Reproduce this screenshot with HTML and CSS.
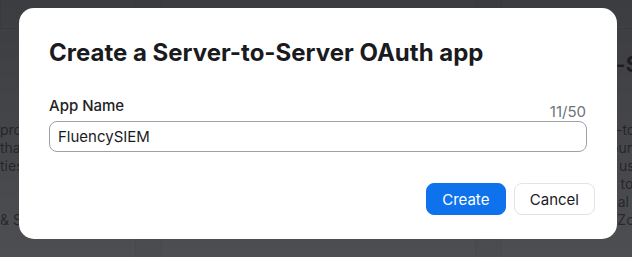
FILE: index.html
```html
<!DOCTYPE html>
<html lang="en">
<head>
    <meta charset="UTF-8">
    <meta name="viewport" content="width=device-width, initial-scale=1.0">
    <title>Create app</title>
    <link rel="stylesheet" href="styles.css">
</head>
<body>
    <div class="page">
        <div class="prev-row">
            <div class="card"></div>
            <div class="card"></div>
            <div class="card"></div>
        </div>
        <div class="row">
            <div class="card">
                <p class="line">processes</p>
                <p class="line">that</p>
                <p class="line">ties</p>
                <p class="line gap">&amp; Services</p>
            </div>
            <div class="card"></div>
            <div class="card">
                <h2>Server-to-Server</h2>
                <p class="line">Use the Server-to-Server</p>
                <p class="line">Authorize to your app</p>
                <p class="line">Add any of the users</p>
                <p class="line">Set the scopes to be</p>
                <p class="line">Build the internal tool</p>
                <p class="line">Use it with our Zoom</p>
            </div>
        </div>
    </div>

    <div class="overlay">
        <div class="modal">
            <h1>Create a Server-to-Server OAuth app</h1>
            <div class="field">
                <div class="field-head">
                    <label for="appName">App Name</label>
                    <span class="counter">11/50</span>
                </div>
                <input type="text" id="appName" value="FluencySIEM">
            </div>
            <div class="actions">
                <button class="btn primary">Create</button>
                <button class="btn">Cancel</button>
            </div>
        </div>
    </div>
</body>
</html>
```

FILE: styles.css
```css
* {
    margin: 0;
    padding: 0;
    box-sizing: border-box;
}

body {
    font-family: 'Inter', 'Noto Sans', sans-serif;
    background-color: #f3f4f6;
    width: 632px;
    height: 257px;
    overflow: hidden;
    color: #222;
}

/* page behind the dialog */
.page {
    height: 257px;
    overflow: hidden;
}

.prev-row,
.row {
    display: grid;
    grid-template-columns: 136px 315px 315px;
    gap: 25px;
}

.prev-row {
    height: 3px;
    margin-bottom: 25px;
}

.prev-row .card {
    border-top: none;
    border-radius: 0 0 12px 12px;
}

.card {
    background-color: #fff;
    border: 1px solid #e4e5e8;
    border-radius: 12px;
    padding: 22px 16px;
    height: 260px;
}

.row .card:first-child {
    padding-left: 0;
    border-left: none;
    border-radius: 0 12px 12px 0;
}

.card h2 {
    font-size: 21px;
    font-weight: 700;
    line-height: 28px;
    margin-bottom: 42px;
    white-space: nowrap;
}

.row .card:first-child .line:first-child {
    margin-top: 70px;
}

.line {
    font-size: 14px;
    line-height: 18px;
    color: #444;
    white-space: nowrap;
}

.line.gap {
    margin-top: 36px;
}

/* dark overlay and dialog */
.overlay {
    position: fixed;
    top: 0;
    left: 0;
    right: 0;
    bottom: 0;
    background: linear-gradient(180deg, rgba(28, 29, 33, 0.86), rgba(33, 34, 38, 0.8));
    padding: 8px 15px 0 19px;
}

.modal {
    width: 598px;
    height: 231px;
    background-color: #fff;
    border-radius: 15px;
    padding: 30px 30px 24px;
    display: flex;
    flex-direction: column;
}

.modal h1 {
    font-size: 24px;
    font-weight: 700;
    line-height: 30px;
    color: #1a1b1e;
}

.field {
    margin-top: 28px;
}

.field-head {
    display: flex;
    justify-content: space-between;
    align-items: flex-end;
    padding-right: 1px;
}

.field-head label {
    font-size: 15px;
    font-weight: 500;
    line-height: 20px;
}

.counter {
    font-size: 15px;
    line-height: 18px;
    color: #6e7378;
    margin-bottom: -5px;
}

.field input {
    display: block;
    width: 100%;
    height: 31px;
    margin-top: 5px;
    border: 1px solid #9ca1a8;
    border-radius: 8px;
    padding: 0 8px;
    font-family: inherit;
    font-size: 15px;
    color: #1a1b1e;
    outline: none;
}

.actions {
    display: flex;
    justify-content: flex-end;
    gap: 8px;
    margin-top: 31px;
    margin-right: -8px;
}

.btn {
    height: 32px;
    min-width: 80px;
    padding: 0 15px;
    border: 1px solid #e1e3e6;
    border-radius: 8px;
    background-color: #fff;
    font-family: inherit;
    font-size: 15px;
    color: #1a1b1e;
    cursor: pointer;
}

.btn.primary {
    background-color: #0e72ed;
    border-color: #0e72ed;
    color: #fff;
}
```
